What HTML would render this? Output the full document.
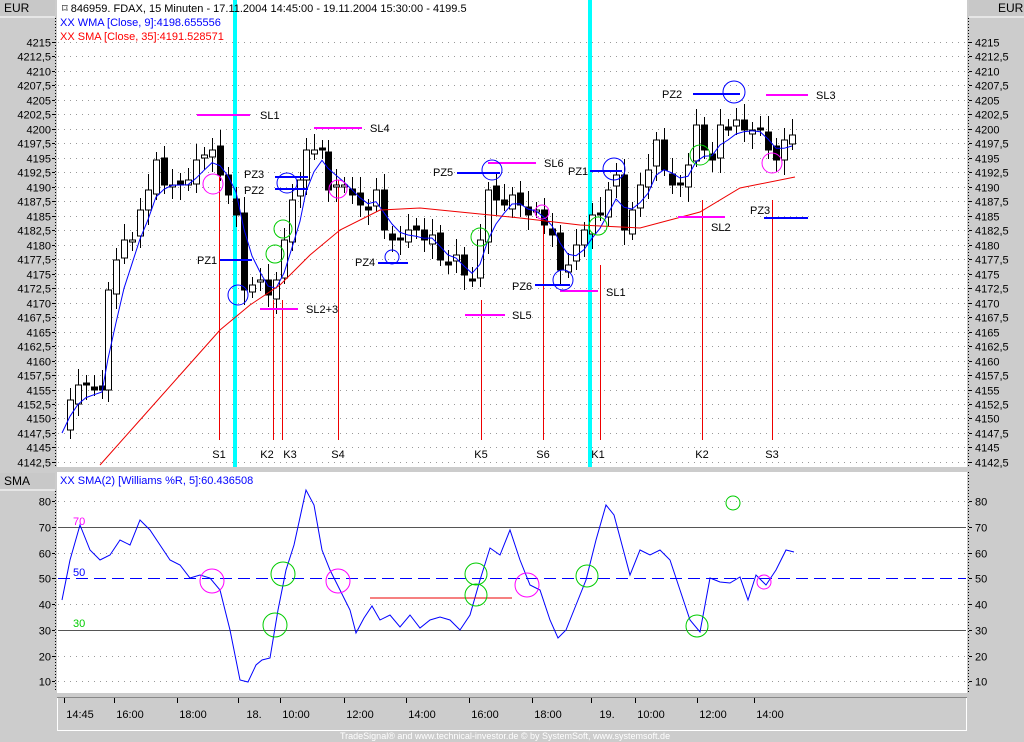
<!DOCTYPE html><html><head><meta charset="utf-8"><style>
body{margin:0;width:1024px;height:742px;background:#cccccc;overflow:hidden;font-family:"Liberation Sans",sans-serif}
svg{position:absolute;left:0;top:0}
</style></head><body>
<svg id="s" width="1024" height="742" xmlns="http://www.w3.org/2000/svg" font-family="Liberation Sans, sans-serif" font-size="11">
<rect x="57" y="0" width="910" height="467" fill="#fff"/>
<rect x="57" y="472" width="910" height="221" fill="#fff"/>
<rect x="0" y="0" width="55" height="16" fill="#c8c8c8"/><text x="4" y="12" font-size="12">EUR</text>
<rect x="969" y="0" width="55" height="16" fill="#c8c8c8"/><text x="998" y="12" font-size="12">EUR</text>
<rect x="0" y="473" width="55" height="16" fill="#c8c8c8"/><text x="4" y="485" font-size="12">SMA</text>
<line x1="0" y1="17" x2="55" y2="17" stroke="#fff"/><line x1="969" y1="17" x2="1024" y2="17" stroke="#fff"/>
<line x1="0" y1="490" x2="55" y2="490" stroke="#fff"/>
<rect x="57.5" y="697.5" width="909" height="33" fill="none" stroke="#fff"/>
<line x1="57" y1="697.5" x2="967" y2="697.5" stroke="#888"/>
<g id="g"></g>
<text x="62" y="12" font-size="11">⌑ 846959. FDAX, 15 Minuten - 17.11.2004 14:45:00 - 19.11.2004 15:30:00 - 4199.5</text>
<text x="60" y="26" fill="#00f">XX WMA [Close, 9]:4198.655556</text>
<text x="60" y="40" fill="#f00">XX SMA [Close, 35]:4191.528571</text>
<text x="60" y="484" fill="#00f">XX SMA(2) [Williams %R, 5]:60.436508</text>
<text x="340" y="739" font-size="9" fill="#fff">TradeSignal® and www.technical-investor.de © by SystemSoft, www.systemsoft.de</text>
</svg>
<script>
var g=document.getElementById('g'),h='';
function L(a,b,c,d,col,w,da){h+='<line x1="'+a+'" y1="'+b+'" x2="'+c+'" y2="'+d+'" stroke="'+col+'" stroke-width="'+(w||1)+'"'+(da?' stroke-dasharray="'+da+'"':'')+'/>';}
function T(x,y,t,col,anc){h+='<text x="'+x+'" y="'+y+'" fill="'+(col||'#000')+'"'+(anc?' text-anchor="'+anc+'"':'')+'>'+t+'</text>';}
function C(x,y,r,col){h+='<circle cx="'+x+'" cy="'+y+'" r="'+(r||10)+'" fill="none" stroke="'+col+'"/>';}
// price grid
for(var i=0;i<=29;i++){var p=4215-i*2.5,y=Math.round(42+i*14.48)+0.5;L(58,y,966,y,'#999',1,'1,5');
var s=(p%1?p.toFixed(1).replace('.',','):p);T(51,y+4,s,'#000','end');T(975,y+4,s);L(52,y,55,y,'#000');L(969,y,972,y,'#000');}
L(55.5,18,55.5,466,'#000',1,'1,2');L(968.5,18,968.5,466,'#000',1,'1,2');
// lower grid
var lv=[80,70,60,50,40,30,20,10];for(i=0;i<8;i++){var v=lv[i],y=Math.round(527+(70-v)*2.57)+0.5;
if(v==70||v==30)L(58,y,966,y,'#555');else if(v==50)L(58,y,966,y,'#00f',1,'12,6');else L(58,y,966,y,'#999',1,'1,5');
T(51,y+4,v,'#000','end');T(975,y+4,v);L(52,y,55,y,'#000');L(969,y,972,y,'#000');}
L(55.5,491,55.5,692,'#000',1,'1,2');L(968.5,472,968.5,692,'#000',1,'1,2');
T(73,525,'70','#f0f');T(73,576,'50','#00f');T(73,627,'30','#0c0');
// time axis
var tl=[[80,'14:45'],[130,'16:00'],[193,'18:00'],[254,'18.'],[296,'10:00'],[360,'12:00'],[422,'14:00'],[485,'16:00'],[548,'18:00'],[607,'19.'],[651,'10:00'],[713,'12:00'],[770,'14:00']];
tl.forEach(function(t){T(t[0],718,t[1],'#000','middle');L(t[0]-15.5,698,t[0]-15.5,703,'#000');});
// separator
h+='<rect x="57" y="467" width="910" height="5" fill="#ccc"/>';
// cyan lines
h+='<rect x="233" y="0" width="4" height="467" fill="#0ff"/><rect x="588" y="0" width="4" height="467" fill="#0ff"/>';
// red vertical lines
[[219,170],[273,300],[282,300],[338,180],[481,300],[543,220],[600,265],[702,200],[772,200]].forEach(function(v){L(v[0]+.5,v[1],v[0]+.5,440,'#e00');});
[['S1',219],['K2',267],['K3',290],['S4',338],['K5',481],['S6',543],['K1',598],['K2',702],['S3',772]].forEach(function(t){T(t[1],458,t[0],'#000','middle');});
// closes
var cl=[[62,430],[70,400],[78,385],[86,385],[94,390],[102,390],[108,290],[116,260],[124,240],[132,240],[140,210],[148,190],[156,160],[164,185],[172,185],[180,185],[188,180],[196,160],[204,155],[212,150],[220,175],[228,195],[236,215],[244,290],[252,285],[260,280],[268,295],[276,280],[284,240],[292,200],[300,180],[306,150],[314,150],[322,150],[328,190],[336,185],[344,185],[352,195],[360,205],[368,210],[376,190],[384,230],[392,240],[400,240],[408,230],[416,230],[424,240],[432,235],[440,260],[448,265],[456,255],[464,275],[472,280],[480,240],[488,190],[496,200],[504,205],[512,195],[520,205],[528,215],[536,210],[544,225],[552,235],[560,270],[568,265],[576,245],[584,230],[592,215],[600,215],[608,190],[616,175],[624,230],[632,210],[640,185],[648,170],[656,140],[664,170],[672,185],[680,185],[688,165],[696,125],[704,150],[712,160],[720,125],[728,130],[736,120],[744,130],[752,130],[760,130],[768,150],[776,160],[784,140],[792,135]];
for(i=1;i<cl.length;i++){var o=cl[i-1][1]+((i*7)%5-2)*2,c=cl[i][1],x=cl[i][0],t=Math.min(o,c),b=Math.max(o,c);if(b-t<2)b=t+2;
L(x+.5,t-8-(i%3)*4,x+.5,b+6+(i%4)*3,'#000');h+='<rect x="'+(x-2.5)+'" y="'+t+'" width="6" height="'+(b-t)+'" fill="'+(c>o?'#000':'#fff')+'" stroke="#000"/>';}
// WMA
var w='';for(i=0;i<cl.length;i++){var s=0,n=0;for(var k=Math.max(0,i-4);k<=i;k++){s+=cl[k][1]*(k-i+5);n+=k-i+5;}w+=cl[i][0]+','+(s/n+3).toFixed(1)+' ';}
h+='<polyline points="'+w+'" fill="none" stroke="#00f"/>';
h+='<polyline points="100,465 140,420 180,375 220,330 250,305 280,285 310,255 340,230 380,210 420,208 460,212 520,218 580,225 640,228 700,212 740,188 795,177" fill="none" stroke="#e00"/>';
// zone lines
L(197,115,250,115,'#f0f',2);T(260,119,'SL1');
L(314,128,362,128,'#f0f',2);T(370,132,'SL4');
L(488,163,536,163,'#f0f',2);T(544,167,'SL6');
L(260,309,298,309,'#f0f',2);T(306,313,'SL2+3');
L(465,315,505,315,'#f0f',2);T(512,319,'SL5');
L(560,291,598,291,'#f0f',2);T(606,296,'SL1');
L(678,217,725,217,'#f0f',2);T(711,231,'SL2');
L(766,95,808,95,'#f0f',2);T(816,99,'SL3');
L(220,260,252,260,'#00f',2);T(197,264,'PZ1');
L(275,177,308,177,'#00f',2);T(244,178,'PZ3');
L(275,189,308,189,'#00f',2);T(244,194,'PZ2');
L(378,263,408,263,'#00f',2);T(355,266,'PZ4');
L(457,173,500,173,'#00f',2);T(433,176,'PZ5');
L(535,285,570,285,'#00f',2);T(512,290,'PZ6');
L(590,171,622,171,'#00f',2);T(568,175,'PZ1');
L(693,94,740,94,'#00f',2);T(662,98,'PZ2');
L(764,218,808,218,'#00f',2);T(750,214,'PZ3');
// circles price
C(238,295,10,'#00f');C(287,183,10,'#00f');C(392,257,7,'#00f');C(492,170,10,'#00f');C(563,280,10,'#00f');C(614,169,11,'#00f');C(734,92,11,'#00f');
C(213,184,10,'#f0f');C(338,189,9,'#f0f');C(542,212,7,'#f0f');C(772,163,10,'#f0f');
C(275,254,9,'#0c0');C(283,229,9,'#0c0');C(480,237,9,'#0c0');C(598,226,9,'#0c0');C(700,155,10,'#0c0');
// williams
var wp='62,600 70,560 80,525 90,550 100,560 110,555 120,540 130,545 140,520 150,530 160,545 170,560 180,565 190,578 200,575 210,578 220,590 230,630 240,680 248,682 256,665 262,660 270,658 278,610 286,570 294,545 306,490 314,505 322,550 330,570 340,590 350,610 356,633 364,618 372,606 380,620 390,615 400,627 410,615 420,628 430,620 440,617 450,620 460,630 470,615 480,580 490,548 500,555 510,530 520,560 530,585 540,590 550,620 558,638 566,630 576,605 586,580 596,540 606,505 614,515 622,545 630,575 640,550 650,555 660,550 670,560 680,590 690,620 700,632 710,578 720,582 730,583 740,577 748,600 756,575 766,585 776,570 786,550 794,552';
h+='<polyline points="'+wp+'" fill="none" stroke="#00f"/>';
L(370,598,512,598,'#e00');
C(212,581,12,'#f0f');C(338,581,12,'#f0f');C(527,585,12,'#f0f');C(764,582,7,'#f0f');
C(275,625,12,'#0c0');C(283,574,12,'#0c0');C(476,574,11,'#0c0');C(476,595,11,'#0c0');C(587,576,11,'#0c0');C(697,626,11,'#0c0');C(733,503,7,'#0c0');
g.innerHTML=h;
</script>
</body></html>
